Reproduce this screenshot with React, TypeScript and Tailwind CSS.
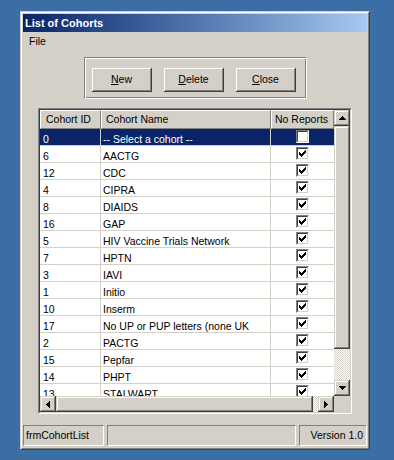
import React from "react";

const rows: [number, string, boolean][] = [
  [0, "-- Select a cohort --", false],
  [6, "AACTG", true],
  [12, "CDC", true],
  [4, "CIPRA", true],
  [8, "DIAIDS", true],
  [16, "GAP", true],
  [5, "HIV Vaccine Trials Network", true],
  [7, "HPTN", true],
  [3, "IAVI", true],
  [1, "Initio", true],
  [10, "Inserm", true],
  [17, "No UP or PUP letters (none UK", true],
  [2, "PACTG", true],
  [15, "Pepfar", true],
  [14, "PHPT", true],
  [13, "STALWART", true],
];

const raised =
  "shadow-[inset_-1px_-1px_#404040,inset_1px_1px_#d4d0c8,inset_-2px_-2px_#808080,inset_2px_2px_#ffffff]";
const btnRaised =
  "shadow-[inset_-1px_-1px_#404040,inset_1px_1px_#ffffff,inset_-2px_-2px_#808080,inset_2px_2px_#d4d0c8]";
const dither =
  "bg-[repeating-conic-gradient(#d4d0c8_0%_25%,#ffffff_0%_50%)] bg-[length:2px_2px]";

function Arrow({ dir }: { dir: "up" | "down" | "left" | "right" }) {
  const horiz = dir === "up" || dir === "down";
  const w = horiz ? 7 : 4;
  const h = horiz ? 4 : 7;
  const rects: [number, number, number, number][] = [];
  for (let i = 0; i < 4; i++) {
    if (dir === "up") rects.push([3 - i, i, 1 + 2 * i, 1]);
    if (dir === "down") rects.push([i, i, 7 - 2 * i, 1]);
    if (dir === "left") rects.push([i, 3 - i, 1, 1 + 2 * i]);
    if (dir === "right") rects.push([i, i, 1, 7 - 2 * i]);
  }
  return (
    <svg width={w} height={h} viewBox={`0 0 ${w} ${h}`} shapeRendering="crispEdges">
      {rects.map((r, i) => (
        <rect key={i} x={r[0]} y={r[1]} width={r[2]} height={r[3]} fill="#000" />
      ))}
    </svg>
  );
}

function ScrollBtn({ dir }: { dir: "up" | "down" | "left" | "right" }) {
  return (
    <div className={`w-[16px] h-[16px] shrink-0 bg-[#d4d0c8] flex items-center justify-center ${raised}`}>
      <Arrow dir={dir} />
    </div>
  );
}

function Check() {
  const px: [number, number][] = [
    [6, 0],
    [5, 1], [6, 1],
    [0, 2], [4, 2], [5, 2], [6, 2],
    [0, 3], [1, 3], [3, 3], [4, 3], [5, 3],
    [0, 4], [1, 4], [2, 4], [3, 4], [4, 4],
    [1, 5], [2, 5], [3, 5],
    [2, 6],
  ];
  return (
    <svg width={7} height={7} viewBox="0 0 7 7" shapeRendering="crispEdges">
      {px.map(([x, y], i) => (
        <rect key={i} x={x} y={y} width={1} height={1} fill="#000" />
      ))}
    </svg>
  );
}

function CheckBox({ checked }: { checked: boolean }) {
  return (
    <div className="w-[13px] h-[13px] border border-t-[#808080] border-l-[#808080] border-r-white border-b-white">
      <div className="w-full h-full border border-t-[#404040] border-l-[#404040] border-r-[#d4d0c8] border-b-[#d4d0c8] bg-white flex items-center justify-center">
        {checked && <Check />}
      </div>
    </div>
  );
}

function Button({ first, rest }: { first: string; rest: string }) {
  return (
    <div className={`w-[60px] h-[24px] bg-[#d4d0c8] flex items-center justify-center ${btnRaised}`}>
      <span>
        <span className="underline underline-offset-[1px]">{first}</span>
        {rest}
      </span>
    </div>
  );
}

export default function App() {
  const hdr =
    "h-full border border-t-white border-l-white border-r-[#808080] border-b-[#808080] leading-[17px] whitespace-nowrap overflow-hidden";
  return (
    <div className="w-[394px] h-[460px] bg-[#3a6ea5] pt-[11px] pl-[20px] font-['Liberation_Sans',Arial,sans-serif] text-[10.5px] text-black">
      <div className="w-[350px] h-[439px] border border-t-[#d4d0c8] border-l-[#d4d0c8] border-r-[#404040] border-b-[#404040]">
        <div className="h-full border border-t-white border-l-white border-r-[#808080] border-b-[#808080] bg-[#d4d0c8] p-[1px] flex flex-col">
          {/* Title bar */}
          <div className="h-[18px] shrink-0 flex items-center pl-[2px] bg-gradient-to-r from-[#0a246a] to-[#a6caf0] text-white font-bold text-[11px]">
            List of Cohorts
          </div>
          {/* Menu */}
          <div className="h-[19px] shrink-0 flex items-center px-[6px]">File</div>
          {/* Button group */}
          <div className="mt-[6px] self-center w-[223px] h-[42px] shrink-0 border border-t-[#808080] border-l-[#808080] border-r-white border-b-white shadow-[inset_1px_1px_#ffffff,inset_-1px_-1px_#808080] flex gap-[12px] pl-[7px] pt-[10px]">
            <Button first="N" rest="ew" />
            <Button first="D" rest="elete" />
            <Button first="C" rest="lose" />
          </div>
          {/* Grid */}
          <div className="mt-[9px] mx-[15px] h-[306px] shrink-0 border border-t-[#808080] border-l-[#808080] border-r-white border-b-white">
            <div className="h-full border border-t-[#404040] border-l-[#404040] border-r-[#d4d0c8] border-b-[#d4d0c8] bg-white flex flex-col">
              <div className="flex flex-1 min-h-0">
                <div className="w-[294px] overflow-hidden">
                  <div className="flex h-[19px] bg-[#d4d0c8]">
                    <div className={`w-[61px] pl-[5px] ${hdr}`}>Cohort ID</div>
                    <div className={`w-[170px] pl-[4px] ${hdr}`}>Cohort Name</div>
                    <div className={`w-[63px] pl-[3px] ${hdr}`}>No Reports</div>
                  </div>
                  {rows.map(([id, name, checked], i) => {
                    const sel = i === 0;
                    return (
                      <div
                        key={id}
                        className={`flex h-[17px] border-b border-[#d4d0c8] ${sel ? "bg-[#0a246a] text-white" : "bg-white"}`}
                      >
                        <div className="w-[61px] h-[16px] border-r border-[#d4d0c8] pl-[3px] leading-[20px] overflow-hidden whitespace-nowrap">
                          {id}
                        </div>
                        <div className="w-[170px] h-[16px] border-r border-[#d4d0c8] pl-[2px] leading-[20px] overflow-hidden whitespace-nowrap">
                          {name}
                        </div>
                        <div className="w-[63px] h-[16px] flex justify-center pt-[1px]">
                          <CheckBox checked={checked} />
                        </div>
                      </div>
                    );
                  })}
                </div>
                <div className="w-[16px] flex flex-col">
                  <ScrollBtn dir="up" />
                  <div className={`h-[223px] shrink-0 bg-[#d4d0c8] ${raised}`} />
                  <div className={`flex-1 ${dither}`} />
                  <ScrollBtn dir="down" />
                </div>
              </div>
              <div className="h-[16px] shrink-0 flex">
                <ScrollBtn dir="left" />
                <div className={`w-[257px] shrink-0 bg-[#d4d0c8] ${raised}`} />
                <div className={`flex-1 ${dither}`} />
                <ScrollBtn dir="right" />
                <div className="w-[16px] shrink-0 bg-[#d4d0c8]" />
              </div>
            </div>
          </div>
          {/* Status bar */}
          <div className="mt-[11px] h-[21px] shrink-0 flex gap-[3px]">
            <div className="w-[81px] border border-t-[#808080] border-l-[#808080] border-r-white border-b-white flex items-center pl-[2px] whitespace-nowrap overflow-hidden">
              frmCohortList
            </div>
            <div className="w-[189px] border border-t-[#808080] border-l-[#808080] border-r-white border-b-white" />
            <div className="w-[68px] border border-t-[#808080] border-l-[#808080] border-r-white border-b-white flex items-center justify-end pr-[3px] whitespace-nowrap">
              Version 1.0
            </div>
          </div>
        </div>
      </div>
    </div>
  );
}
